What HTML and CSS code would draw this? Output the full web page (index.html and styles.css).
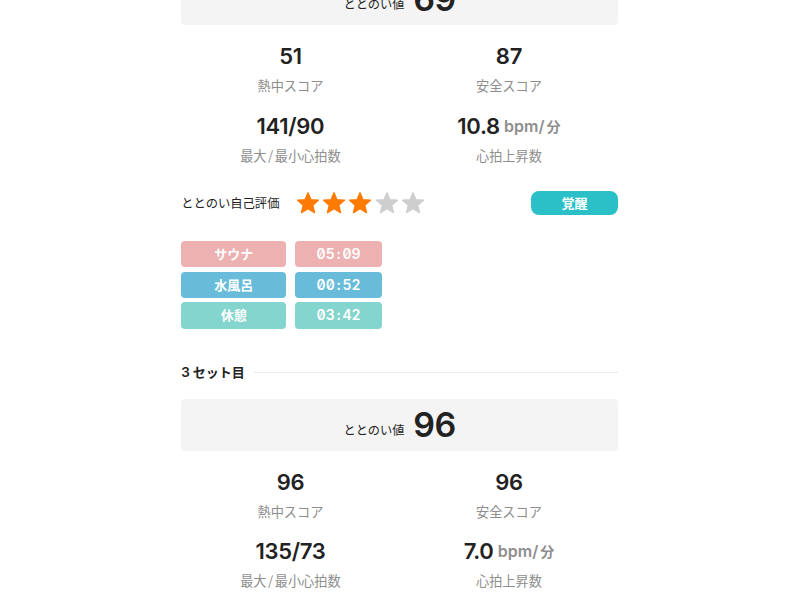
FILE: index.html
```html
<!DOCTYPE html>
<html lang="ja">
<head>
    <meta charset="UTF-8">
    <meta name="viewport" content="width=device-width, initial-scale=1.0">
    <title>ととのい記録</title>
    <link rel="stylesheet" href="styles.css">
</head>
<body>
    <svg class="defs">
        <symbol id="star" viewBox="0 0 24 24">
            <path d="M12 1.8 L14.9 8.7 L22.4 9.3 L16.7 14.2 L18.5 21.6 L12 17.6 L5.5 21.6 L7.3 14.2 L1.6 9.3 L9.1 8.7 Z"/>
        </symbol>
    </svg>

    <main class="container">
        <section class="set">
            <div class="total">
                <span class="total-label">ととのい値</span>
                <span class="total-value">69</span>
            </div>

            <div class="scores">
                <div class="score">
                    <div class="score-value">51</div>
                    <div class="score-label">熱中スコア</div>
                </div>
                <div class="score">
                    <div class="score-value">87</div>
                    <div class="score-label">安全スコア</div>
                </div>
                <div class="score">
                    <div class="score-value">141/90</div>
                    <div class="score-label">最大<span class="slash">/</span>最小心拍数</div>
                </div>
                <div class="score">
                    <div class="score-value">10.8 <span class="unit">bpm/<span class="unit-ja">分</span></span></div>
                    <div class="score-label">心拍上昇数</div>
                </div>
            </div>

            <div class="rating">
                <span class="rating-label">ととのい自己評価</span>
                <div class="stars">
                    <svg class="star on"><use href="#star"/></svg>
                    <svg class="star on"><use href="#star"/></svg>
                    <svg class="star on"><use href="#star"/></svg>
                    <svg class="star"><use href="#star"/></svg>
                    <svg class="star"><use href="#star"/></svg>
                </div>
                <span class="tag">覚醒</span>
            </div>

            <div class="times">
                <div class="cell sauna">サウナ</div>
                <div class="cell time sauna">05<span class="colon">:</span>09</div>
                <div class="cell water">水風呂</div>
                <div class="cell time water">00<span class="colon">:</span>52</div>
                <div class="cell rest">休憩</div>
                <div class="cell time rest">03<span class="colon">:</span>42</div>
            </div>
        </section>

        <section class="set">
            <h2 class="set-title"><span><span class="set-number">3</span>セット目</span></h2>

            <div class="total">
                <span class="total-label">ととのい値</span>
                <span class="total-value">96</span>
            </div>

            <div class="scores">
                <div class="score">
                    <div class="score-value">96</div>
                    <div class="score-label">熱中スコア</div>
                </div>
                <div class="score">
                    <div class="score-value">96</div>
                    <div class="score-label">安全スコア</div>
                </div>
                <div class="score">
                    <div class="score-value">135/73</div>
                    <div class="score-label">最大<span class="slash">/</span>最小心拍数</div>
                </div>
                <div class="score">
                    <div class="score-value">7.0 <span class="unit">bpm/<span class="unit-ja">分</span></span></div>
                    <div class="score-label">心拍上昇数</div>
                </div>
            </div>
        </section>
    </main>
</body>
</html>
```

FILE: styles.css
```css
body {
    margin: 0;
    height: 600px;
    overflow: hidden;
    background-color: #fff;
    color: #222;
    font-family: Inter, "Noto Sans CJK JP", sans-serif;
}
.defs {
    display: none;
}
.container {
    display: flow-root;
    width: 437px;
    margin: 0 0 0 181.2px;
}
/* the list is scrolled so that the first panel is cut off */
.set:first-child {
    margin-top: -27px;
}
.total {
    display: flex;
    justify-content: center;
    gap: 9px;
    height: 52px;
    line-height: 52px;
    border-radius: 4px;
    background-color: #f4f4f4;
}
.total-label {
    padding-top: 5px;
    font-family: "Noto Sans CJK JP", sans-serif;
    font-size: 12.2px;
}
.total-value {
    font-size: 34px;
    font-weight: 600;
    letter-spacing: -0.5px;
}
.scores {
    display: grid;
    grid-template-columns: 1fr 1fr;
    row-gap: 13.5px;
    padding-top: 15px;
    text-align: center;
}
.score-value {
    height: 32px;
    line-height: 32px;
    font-size: 22px;
    font-weight: 600;
    letter-spacing: -0.3px;
    white-space: nowrap;
}
.unit {
    color: #8e8e8e;
    font-size: 16px;
    letter-spacing: 0;
    line-height: 20px;
    margin-left: -1px;
    vertical-align: 2px;
}
.unit-ja {
    font-size: 14px;
    margin-left: 2px;
}
.score-label {
    height: 20px;
    line-height: 20px;
    margin-top: 4px;
    color: #8e8e8e;
    font-family: "Noto Sans CJK JP", sans-serif;
    font-size: 13.2px;
}
.slash {
    margin: 0 1.5px;
}
.rating {
    display: flex;
    align-items: center;
    height: 24px;
    margin-top: 25.5px;
}
.rating-label {
    font-family: "Noto Sans CJK JP", sans-serif;
    font-size: 12.3px;
    line-height: 24px;
}
.stars {
    display: flex;
    gap: 2.2px;
    margin-left: 16.5px;
}
.star {
    width: 24px;
    height: 24px;
    fill: #cecece;
    stroke: #cecece;
    stroke-width: 1.4;
    stroke-linejoin: round;
}
.star.on {
    fill: #ff7a00;
    stroke: #ff7a00;
}
.tag {
    width: 87.5px;
    height: 24px;
    margin-left: auto;
    border-radius: 8px;
    background-color: #2bc0c8;
    color: #fff;
    font-family: "Noto Sans CJK JP", sans-serif;
    font-size: 13px;
    font-weight: 700;
    line-height: 24px;
    text-align: center;
}
.times {
    display: grid;
    grid-template-columns: 105px 87.5px;
    grid-auto-rows: 26.3px;
    gap: 4.4px 8.7px;
    margin-top: 26px;
}
.cell {
    border-radius: 4px;
    color: #fff;
    font-family: "Noto Sans CJK JP", sans-serif;
    font-size: 13px;
    font-weight: 700;
    line-height: 26px;
    text-align: center;
}
.time {
    font-family: Inter, sans-serif;
    font-size: 14px;
    font-weight: 600;
    font-feature-settings: "tnum", "zero";
}
.colon {
    margin: 0 2px;
}
.sauna {
    background-color: #edb1b1;
}
.water {
    background-color: #68bcd9;
}
.rest {
    background-color: #84d5cd;
}
.set-title {
    display: flex;
    align-items: center;
    gap: 9px;
    height: 20px;
    margin: 34px 0 16.2px;
    font-family: "Noto Sans CJK JP", sans-serif;
    font-size: 13px;
    font-weight: 700;
    line-height: 18px;
}
.set-title > span {
    padding-bottom: 2px;
}
.set-title::after {
    content: "";
    flex: 1;
    height: 1px;
    background-color: #ebebeb;
}
.set-number {
    font-family: Inter, sans-serif;
    font-size: 13.5px;
    font-weight: 600;
    margin-right: 3px;
}
```
